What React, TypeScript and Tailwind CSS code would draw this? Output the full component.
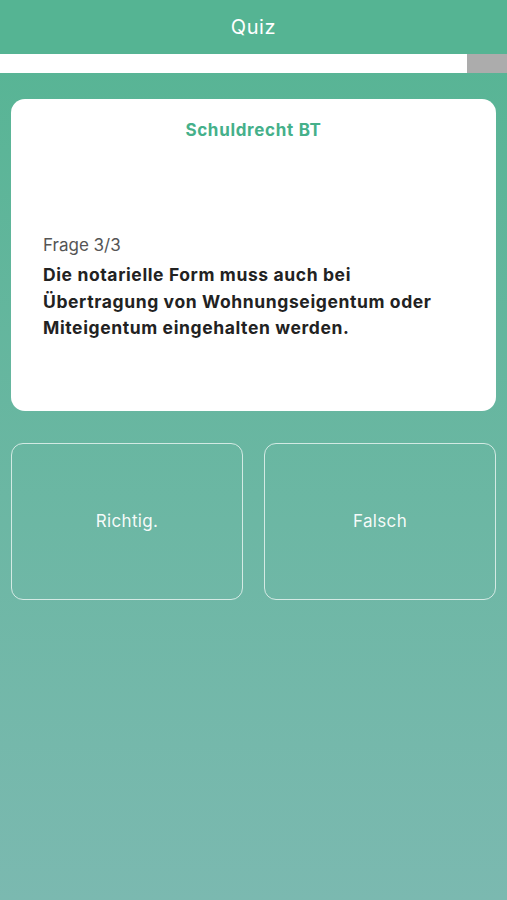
export default function App() {
  return (
    <div
      className="flex h-[900px] w-full flex-col bg-gradient-to-b from-[#55b493] to-[#7bb9b0]"
      style={{ fontFamily: "Inter, 'Liberation Sans', sans-serif" }}
    >
      <header className="flex h-[54px] items-center justify-center bg-[#55b493]">
        <h1 className="text-[20px] font-normal tracking-[0.03em] text-white">Quiz</h1>
      </header>

      <div className="flex h-[19px] w-full">
        <div className="flex-1 bg-white" />
        <div className="w-[40px] bg-[#acacac]" />
      </div>

      <div className="px-[11px] pt-[26px]">
        <div className="flex h-[312px] flex-col rounded-[14px] bg-white px-[32px] pt-[19px]">
          <p className="text-center text-[17px] font-bold tracking-[0.04em] text-[#45b08a]">
            Schuldrecht BT
          </p>
          <p className="mt-[89px] text-[17px] text-[#555555]">Frage 3/3</p>
          <p className="mt-[4px] text-[17.5px] font-bold leading-[26.5px] tracking-[0.035em] text-[#222222]">
            Die notarielle Form muss auch bei
            <br />
            Übertragung von Wohnungseigentum oder
            <br />
            Miteigentum eingehalten werden.
          </p>
        </div>

        <div className="mt-[32px] grid grid-cols-2 gap-[21px]">
          {["Richtig.", "Falsch"].map((label) => (
            <button
              key={label}
              className="flex h-[157px] items-center justify-center rounded-[12px] border border-white/70 text-[17px] tracking-[0.02em] text-white/95"
            >
              {label}
            </button>
          ))}
        </div>
      </div>
    </div>
  );
}
